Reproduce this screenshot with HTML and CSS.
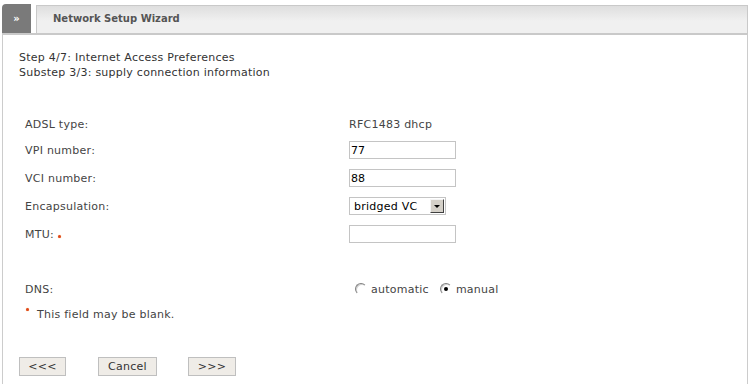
FILE: index.html
```html
<!DOCTYPE html>
<html lang="en">
<head>
    <meta charset="UTF-8">
    <meta name="viewport" content="width=device-width, initial-scale=1.0">
    <title>Network Setup Wizard</title>
    <link rel="stylesheet" href="styles.css">
</head>
<body>
    <div class="wizard">
        <div class="wizard-head">
            <div class="head-tab">&raquo;</div>
            <div class="head-title">Network Setup Wizard</div>
        </div>
        <div class="wizard-body">
            <p class="step">Step 4/7: Internet Access Preferences<br>Substep 3/3: supply connection information</p>

            <form class="setup-form">
                <div class="form-row short">
                    <label>ADSL type:</label>
                    <span class="value">RFC1483 dhcp</span>
                </div>
                <div class="form-row">
                    <label for="vpi">VPI number:</label>
                    <input type="text" id="vpi" value="77">
                </div>
                <div class="form-row">
                    <label for="vci">VCI number:</label>
                    <input type="text" id="vci" value="88">
                </div>
                <div class="form-row">
                    <label for="encap">Encapsulation:</label>
                    <span class="select-wrap">
                        <select id="encap">
                            <option>bridged VC</option>
                            <option>bridged LLC</option>
                            <option>routed VC</option>
                            <option>routed LLC</option>
                        </select>
                    </span>
                </div>
                <div class="form-row">
                    <label for="mtu">MTU: <span class="dot"></span></label>
                    <input type="text" id="mtu" value="">
                </div>
                <div class="form-row dns">
                    <label>DNS:</label>
                    <span class="radios">
                        <label class="radio"><input type="radio" name="dns"> automatic</label>
                        <label class="radio"><input type="radio" name="dns" checked> manual</label>
                    </span>
                </div>
                <p class="note"><span class="dot"></span>This field may be blank.</p>

                <div class="buttons">
                    <button type="button" class="btn btn-prev">&lt;&lt;&lt;</button>
                    <button type="button" class="btn btn-cancel">Cancel</button>
                    <button type="button" class="btn btn-next">&gt;&gt;&gt;</button>
                </div>
            </form>
        </div>
    </div>
</body>
</html>
```

FILE: styles.css
```css
body {
    margin: 0;
    font-family: "DejaVu Sans", Verdana, sans-serif;
    font-size: 11px;
    letter-spacing: 0.25px;
    color: #444;
    background-color: #ffffff;
}
.wizard {
    margin-left: 2px;
    padding-top: 4px;
    width: 746px;
}
.wizard-head {
    display: flex;
    height: 29px;
}
.head-tab {
    width: 29px;
    background-color: #7a7a7a;
    border-top-left-radius: 4px;
    color: #ffffff;
    font-weight: bold;
    font-size: 10px;
    letter-spacing: 0;
    line-height: 29px;
    text-align: center;
}
.head-title {
    flex: 1;
    margin-left: 5px;
    margin-top: 1px;
    padding-left: 16px;
    border: 1px solid #c9c9c9;
    border-bottom: none;
    background: linear-gradient(#dedede, #f0f0f0 55%, #f0f0f0);
    font-weight: bold;
    font-size: 10px;
    letter-spacing: 0;
    color: #555;
    line-height: 26px;
}
.wizard-body {
    border-top: 2px solid #c9c9c9;
    border-left: 1px solid #cccccc;
    border-right: 1px solid #cccccc;
    padding: 15px 16px 20px 16px;
    min-height: 330px;
}
.step {
    margin: 0;
    line-height: 15px;
    color: #333;
}
.setup-form {
    margin: 32px 0 0 6px;
}
.form-row {
    display: flex;
    align-items: center;
    height: 28px;
}
.form-row.short {
    height: 24px;
}
.form-row > label {
    width: 324px;
}
.form-row input[type="text"] {
    box-sizing: border-box;
    width: 107px;
    height: 18px;
    margin: 0;
    padding: 0 1px;
    border: 1px solid #c4c4c4;
    font-family: "DejaVu Sans", Verdana, sans-serif;
    font-size: 11px;
    color: #000;
}
.select-wrap {
    position: relative;
    display: inline-block;
    width: 97px;
    height: 18px;
}
.select-wrap select {
    appearance: none;
    -webkit-appearance: none;
    box-sizing: border-box;
    width: 97px;
    height: 18px;
    margin: 0;
    padding: 0 0 0 4px;
    border: 1px solid #c4c4c4;
    border-radius: 0;
    background: #fff;
    font-family: "DejaVu Sans", Verdana, sans-serif;
    font-size: 11px;
    letter-spacing: 0.25px;
    color: #000;
}
.select-wrap::after {
    content: "";
    position: absolute;
    top: 2px;
    right: 2px;
    width: 14px;
    height: 14px;
    box-sizing: border-box;
    background-color: #d4d0c8;
    border-top: 1px solid #f4f4f4;
    border-left: 1px solid #f4f4f4;
    border-right: 1px solid #404040;
    border-bottom: 1px solid #404040;
    pointer-events: none;
}
.select-wrap::before {
    content: "";
    position: absolute;
    z-index: 1;
    top: 8px;
    right: 6px;
    border-left: 3px solid transparent;
    border-right: 3px solid transparent;
    border-top: 3px solid #000;
    pointer-events: none;
}
.dot {
    display: inline-block;
    width: 3px;
    height: 3px;
    border-radius: 50%;
    background-color: #e0461e;
    box-shadow: 0 0 1px #f0a040;
}
.form-row.dns {
    margin-top: 27px;
}
.radios {
    display: flex;
    gap: 11px;
    margin-left: 6px;
}
.radio {
    display: flex;
    align-items: center;
}
.radio input {
    appearance: none;
    -webkit-appearance: none;
    width: 12px;
    height: 12px;
    margin: 0 4px 0 0;
    border-radius: 50%;
    border: 1px solid;
    border-color: #808080 #ffffff #ffffff #808080;
    background: #fff;
    box-shadow: inset 1px 1px 0 #d0d0d0;
    position: relative;
}
.radio input:checked::after {
    content: "";
    position: absolute;
    top: 3px;
    left: 3px;
    width: 4px;
    height: 4px;
    border-radius: 50%;
    background: #000;
}
.note {
    margin: 4px 0 0 1px;
    line-height: 15px;
}
.note .dot {
    vertical-align: 7px;
    margin-right: 8px;
}
.buttons {
    display: flex;
    margin: 35px 0 0 -6px;
}
.btn {
    height: 19px;
    padding: 0;
    border: 1px solid #bfbfbf;
    background-color: #efece7;
    font-family: "DejaVu Sans", Verdana, sans-serif;
    font-size: 11px;
    letter-spacing: 0.25px;
    color: #333;
    cursor: pointer;
}
.btn-prev {
    width: 47px;
}
.btn-cancel {
    width: 59px;
    margin-left: 32px;
}
.btn-next {
    width: 48px;
    margin-left: 31px;
}
```
